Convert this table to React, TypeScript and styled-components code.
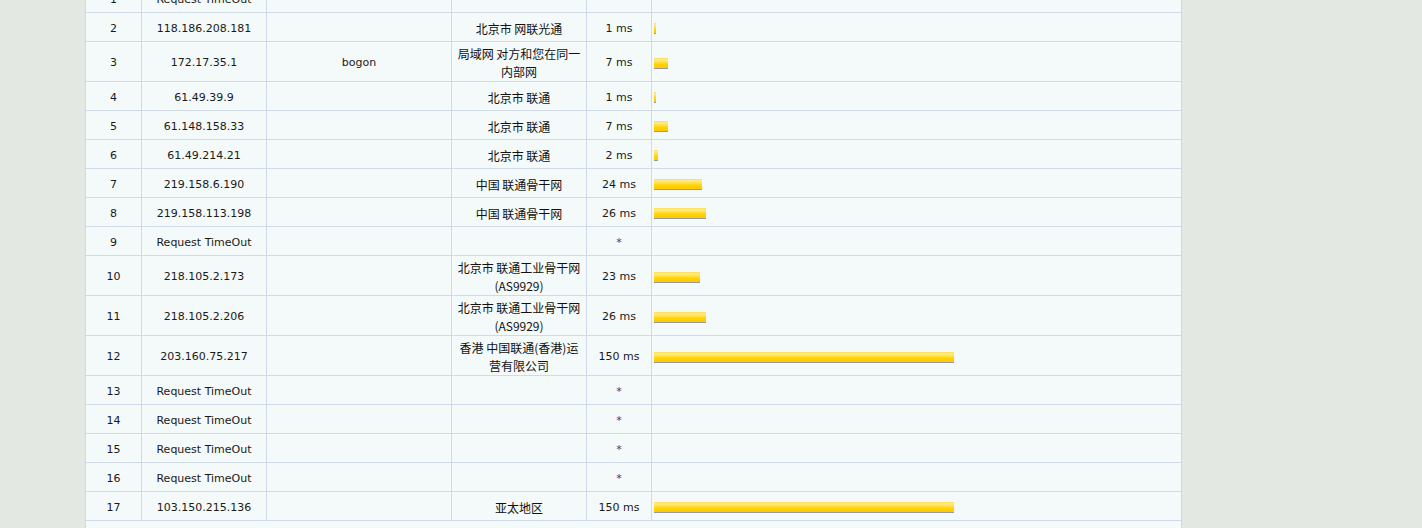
import React from "react";
import styled, { createGlobalStyle } from "styled-components";

const Global = createGlobalStyle`
  html, body { margin: 0; padding: 0; background: #e4e8e2; }
  body { overflow: hidden; }
`;

const Page = styled.div`
  height: 528px;
  overflow: hidden;
  padding-left: 85px;
`;

const Panel = styled.div`
  width: 1095px;
  min-height: 600px;
  margin-top: -16px;
  background: #f4f9f9;
  border-left: 1px solid #cfd9e8;
  border-right: 1px solid #cfd9e8;
  font-family: "DejaVu Sans", "Noto Sans CJK SC", sans-serif;
  font-size: 11px;
  color: #1a1a1a;
`;

const Row = styled.div`
  display: grid;
  grid-template-columns: 56px 125px 185px 135px 65px 529px;
  border-bottom: 1px solid #cfd9e8;
`;

const Cell = styled.div<{ $last?: boolean }>`
  box-sizing: border-box;
  min-height: 28px;
  padding: 3px 2px 0;
  line-height: 18px;
  display: flex;
  flex-direction: column;
  align-items: center;
  justify-content: center;
  text-align: center;
  border-right: ${(p) => (p.$last ? "none" : "1px solid #cfd9e8")};
`;

const BarCell = styled(Cell)`
  align-items: flex-start;
  padding: 4px 2px 1px;
`;

const Loc = styled.span`
  display: block;
  font-family: "Noto Sans CJK SC", sans-serif;
  font-size: 12px;
  line-height: 18px;
  color: #111;
`;

const Star = styled.span`
  color: #34348f;
  font-size: 11px;
`;

const Bar = styled.div`
  height: 10px;
  border-bottom: 1px solid #9a9a9a;
  background: linear-gradient(
    to bottom,
    #ffdb4d 0%,
    #ffeb8a 18%,
    #ffe04a 40%,
    #ffd200 65%,
    #ffc800 100%
  );
`;

type Hop = {
  n: number;
  ip: string;
  host?: string;
  loc?: string[];
  ms?: number;
};

const hops: Hop[] = [
  { n: 1, ip: "Request TimeOut" },
  { n: 2, ip: "118.186.208.181", loc: ["北京市 网联光通"], ms: 1 },
  { n: 3, ip: "172.17.35.1", host: "bogon", loc: ["局域网 对方和您在同一", "内部网"], ms: 7 },
  { n: 4, ip: "61.49.39.9", loc: ["北京市 联通"], ms: 1 },
  { n: 5, ip: "61.148.158.33", loc: ["北京市 联通"], ms: 7 },
  { n: 6, ip: "61.49.214.21", loc: ["北京市 联通"], ms: 2 },
  { n: 7, ip: "219.158.6.190", loc: ["中国 联通骨干网"], ms: 24 },
  { n: 8, ip: "219.158.113.198", loc: ["中国 联通骨干网"], ms: 26 },
  { n: 9, ip: "Request TimeOut" },
  { n: 10, ip: "218.105.2.173", loc: ["北京市 联通工业骨干网", "(AS9929)"], ms: 23 },
  { n: 11, ip: "218.105.2.206", loc: ["北京市 联通工业骨干网", "(AS9929)"], ms: 26 },
  { n: 12, ip: "203.160.75.217", loc: ["香港 中国联通(香港)运", "营有限公司"], ms: 150 },
  { n: 13, ip: "Request TimeOut" },
  { n: 14, ip: "Request TimeOut" },
  { n: 15, ip: "Request TimeOut" },
  { n: 16, ip: "Request TimeOut" },
  { n: 17, ip: "103.150.215.136", loc: ["亚太地区"], ms: 150 },
];

export default function App() {
  return (
    <>
      <Global />
      <Page>
        <Panel>
          {hops.map((h) => (
            <Row key={h.n}>
              <Cell>{h.n}</Cell>
              <Cell>{h.ip}</Cell>
              <Cell>{h.host ?? ""}</Cell>
              <Cell>
                {(h.loc ?? []).map((l, i) => (
                  <Loc key={i}>{l}</Loc>
                ))}
              </Cell>
              <Cell>{h.ms !== undefined ? `${h.ms} ms` : <Star>*</Star>}</Cell>
              <BarCell $last>
                {h.ms !== undefined && <Bar style={{ width: h.ms * 2 }} />}
              </BarCell>
            </Row>
          ))}
        </Panel>
      </Page>
    </>
  );
}
